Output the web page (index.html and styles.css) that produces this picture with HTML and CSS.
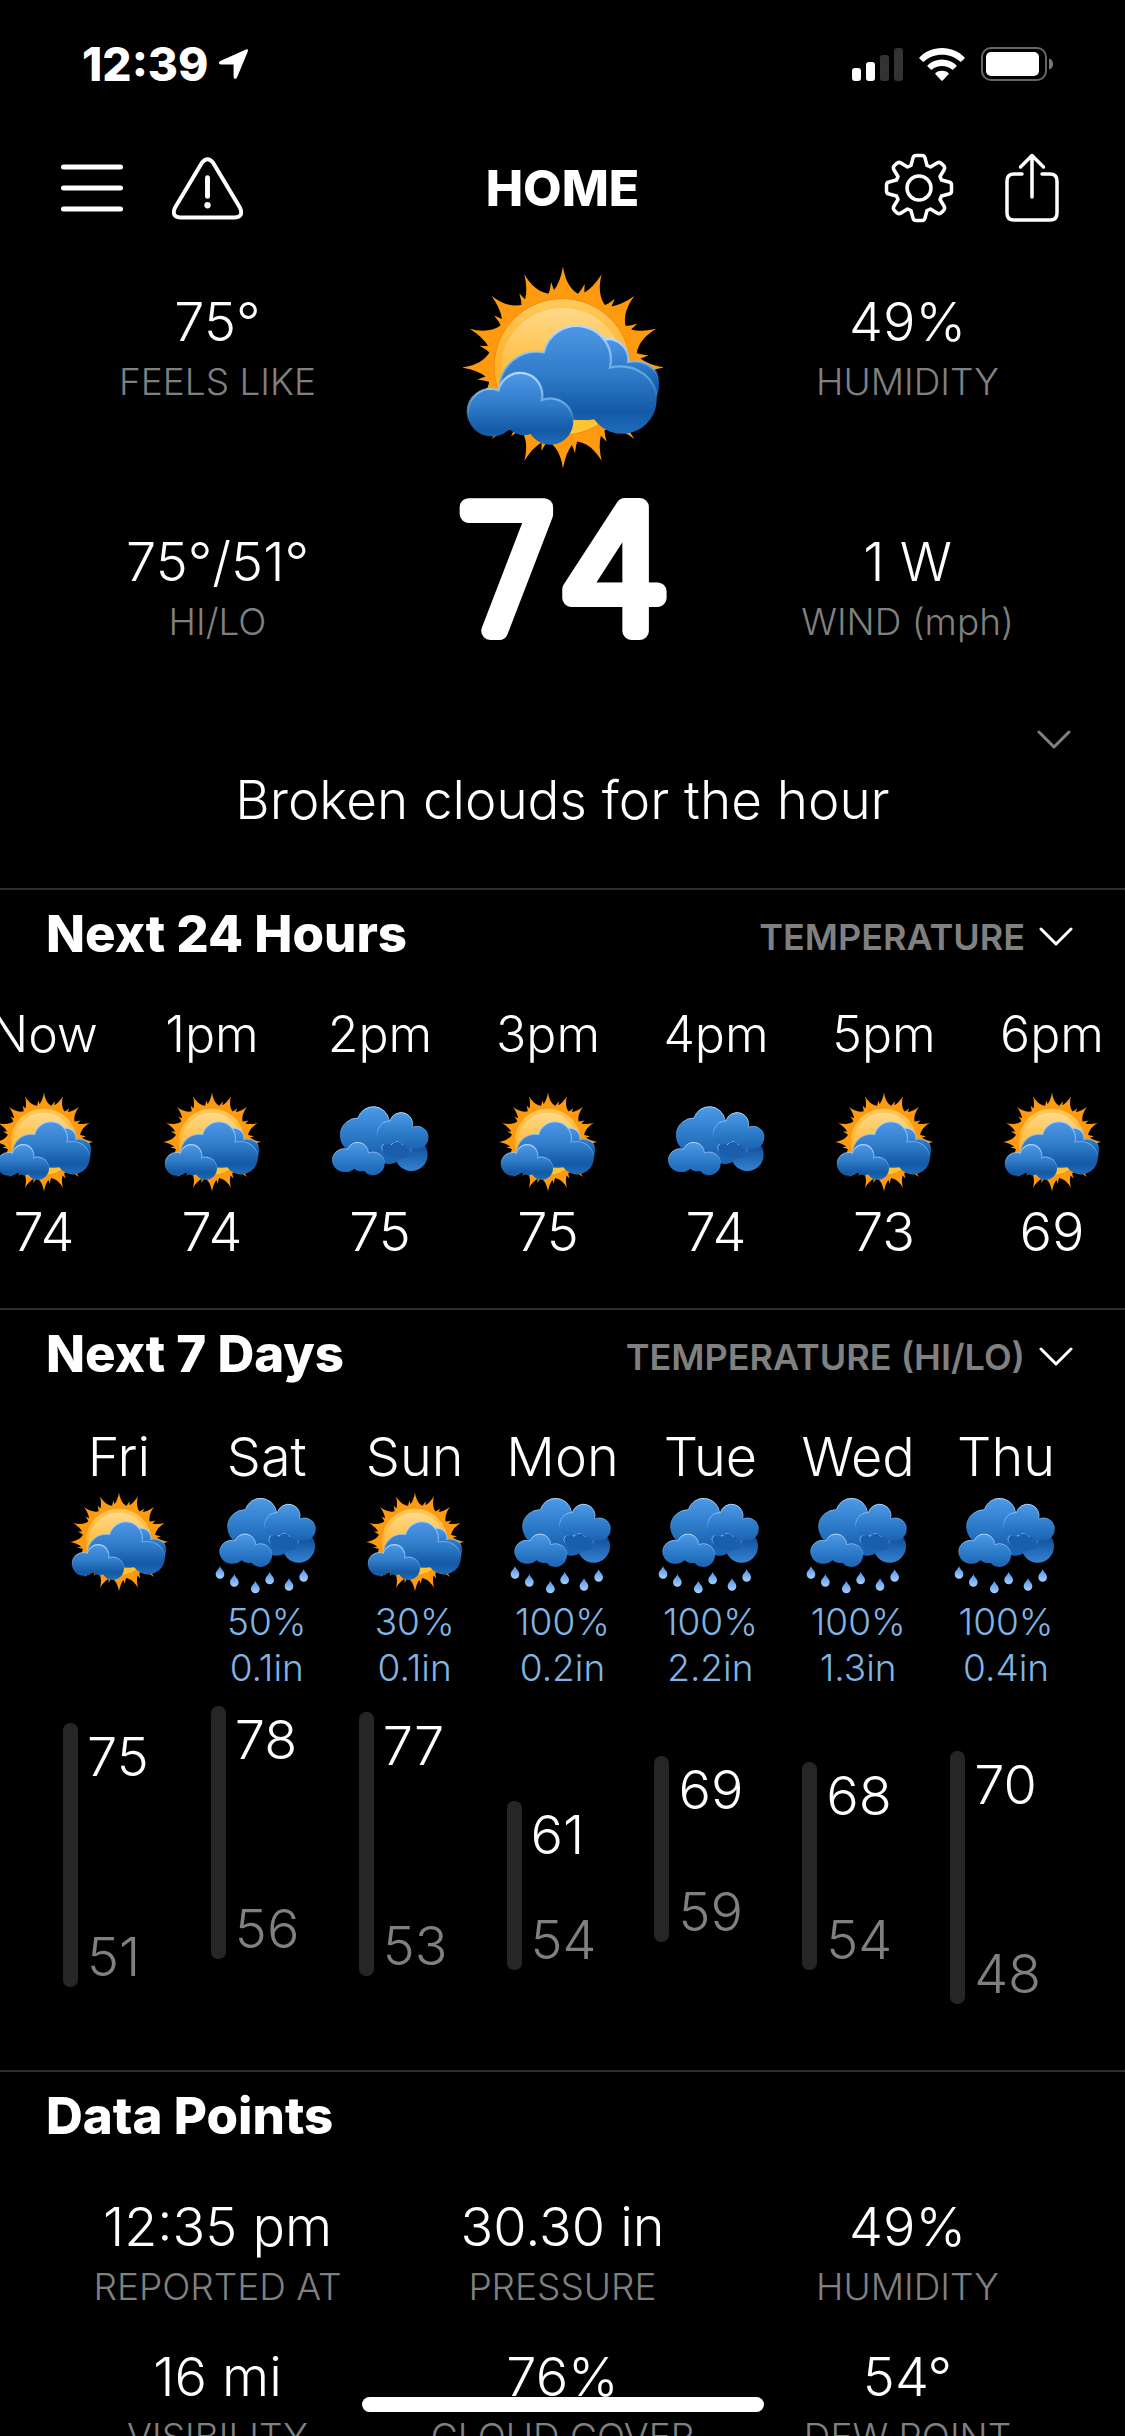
FILE: index.html
```html
<!DOCTYPE html>
<html lang="en">
<head>
	<meta charset="UTF-8">
	<meta name="viewport" content="width=device-width">
	<title>Home</title>
	<link rel="stylesheet" href="styles.css">
</head>
<body>
	<!-- shared weather icons -->
	<svg class="defs" aria-hidden="true">
		<defs>
			<linearGradient id="gCloud" x1="0" y1="0" x2="0" y2="1">
				<stop offset="0" stop-color="#4f97e6"/>
				<stop offset=".45" stop-color="#2f7cc9"/>
				<stop offset=".8" stop-color="#1459a5"/>
				<stop offset="1" stop-color="#1f6dbd"/>
			</linearGradient>
			<linearGradient id="gSoft" x1="0" y1="0" x2="0" y2="1">
				<stop offset="0" stop-color="#4d9ae6"/>
				<stop offset=".55" stop-color="#2d7cca"/>
				<stop offset="1" stop-color="#1c63b2"/>
			</linearGradient>
			<linearGradient id="gBack" x1="0" y1="0" x2="0" y2="1">
				<stop offset=".3" stop-color="#14549f"/>
				<stop offset="1" stop-color="#3583d2"/>
			</linearGradient>
			<linearGradient id="gEdge" x1="0" y1="0" x2="0" y2="1">
				<stop offset="0" stop-color="#b5d8fb"/>
				<stop offset=".5" stop-color="#7ab6f0" stop-opacity=".6"/>
				<stop offset=".7" stop-color="#6aabec" stop-opacity="0"/>
			</linearGradient>
			<linearGradient id="gSun" x1="0" y1="0" x2="0" y2="1">
				<stop offset="0" stop-color="#ffca5c"/>
				<stop offset=".5" stop-color="#ffb02a"/>
				<stop offset="1" stop-color="#ffc93a"/>
			</linearGradient>
			<linearGradient id="gSunIn" x1="0" y1="0" x2="0" y2="1">
				<stop offset="0" stop-color="#ffd98a"/>
				<stop offset=".5" stop-color="#ffbd3d"/>
				<stop offset="1" stop-color="#ffc42e"/>
			</linearGradient>
			<linearGradient id="gDrop" x1="0" y1="0" x2="0" y2="1">
				<stop offset="0" stop-color="#4a8fee"/>
				<stop offset="1" stop-color="#a9cffb"/>
			</linearGradient>
			<path id="ray" d="M0-305C5-268 20-235 50-220L50-150H-50L-46-214Q-38-235-36-258Q-32-246-27-234Q-8-258 0-305Z"/>
			<path id="drop" d="M0-19C3-9 13-4 13 6A13 13 0 0 1-13 6C-13-4-3-9 0-19Z" fill="url(#gDrop)"/>
			<g id="clouds">
				<circle cx="239" cy="148" r="49" fill="url(#gBack)"/>
				<circle cx="172" cy="133" r="43" fill="#1b63b3"/>
				<g stroke="url(#gEdge)" stroke-width="3">
					<path d="M64 142A53 53 0 0 1 79 38A48 48 0 0 1 172 43C196 60 200 100 192 128C182 148 150 152 130 142C110 150 85 150 64 142Z" fill="url(#gSoft)"/>
					<path d="M150 128C150 112 172 108 180 118C186 106 206 104 212 118C226 114 240 124 238 138C234 162 206 164 192 156C172 158 152 148 150 128Z" fill="#1a5fae"/>
					<path d="M146 110A38 38 0 0 1 175 47A34 34 0 0 1 242 66A34 34 0 0 1 290 97A34 34 0 0 1 256 131C242 132 228 128 222 124C212 118 204 108 194 108C180 118 158 120 146 110Z" fill="url(#gSoft)"/>
					<path d="M37 200A35 35 0 0 1 2 165A35 35 0 0 1 48 132A32 32 0 0 1 110 143A35 35 0 1 1 97 197C86 199 76 197 68 190C58 199 48 201 37 200Z" fill="url(#gSoft)"/>
				</g>
			</g>
		</defs>
		<symbol id="partly" viewBox="96 47 604 610">
			<g transform="translate(398 352)" fill="#ff9a0e">
				<circle r="218"/>
				<use href="#ray"/>
				<use href="#ray" transform="rotate(22.5)"/>
				<use href="#ray" transform="rotate(45)"/>
				<use href="#ray" transform="rotate(67.5)"/>
				<use href="#ray" transform="rotate(90)"/>
				<use href="#ray" transform="rotate(112.5)"/>
				<use href="#ray" transform="rotate(135)"/>
				<use href="#ray" transform="rotate(157.5)"/>
				<use href="#ray" transform="rotate(180)"/>
				<use href="#ray" transform="rotate(202.5)"/>
				<use href="#ray" transform="rotate(225)"/>
				<use href="#ray" transform="rotate(247.5)"/>
				<use href="#ray" transform="rotate(270)"/>
				<use href="#ray" transform="rotate(292.5)"/>
				<use href="#ray" transform="rotate(315)"/>
				<use href="#ray" transform="rotate(337.5)"/>
			</g>
			<circle cx="396" cy="350" r="206" fill="url(#gSun)" stroke="#f08a10" stroke-width="3"/>
			<circle cx="396" cy="358" r="186" fill="url(#gSunIn)"/>
			<g stroke="url(#gEdge)" stroke-width="7">
				<path d="M510 272A60 60 0 0 1 594 336C640 326 688 352 688 400C688 420 684 436 676 446H540Z" fill="url(#gCloud)"/>
				<path d="M205 420C206 345 268 294 340 306A101 101 0 0 1 540 352C620 336 681 385 681 450A104 104 0 0 1 492 508C470 512 430 512 400 506L205 440Z" fill="url(#gCloud)"/>
				<path d="M180 560A70 70 0 0 1 110 490A70 70 0 0 1 203 421A67 67 0 0 1 334 450A70 70 0 1 1 300 553C278 562 252 554 236 538C222 553 202 561 180 560Z" fill="url(#gCloud)"/>
			</g>
		</symbol>
		<symbol id="cloudy" viewBox="0 0 294 300">
			<use href="#clouds" transform="translate(2 40)"/>
		</symbol>
		<symbol id="rain" viewBox="0 0 294 300" overflow="visible">
			<use href="#clouds" transform="translate(3 15)"/>
			<g transform="translate(3 15)">
				<use href="#drop" x="3" y="226"/>
				<use href="#drop" x="46" y="250"/>
				<use href="#drop" x="109" y="270"/>
				<use href="#drop" x="152" y="243"/>
				<use href="#drop" x="210" y="262"/>
				<use href="#drop" x="254" y="235"/>
			</g>
		</symbol>
		<symbol id="chevron" viewBox="0 0 34 20">
			<path d="M2 2L17 17L32 2" fill="none" stroke="currentColor" stroke-width="3" stroke-linecap="round" stroke-linejoin="round"/>
		</symbol>
	</svg>

	<div class="app">
		<div class="status">
			<div class="status-left">
				<span class="time">12:39</span>
				<svg class="locate" viewBox="0 0 29 30"><path d="M27 0.5C28.5 0 29.2 1 28.8 2.4L18 28.5C17 30.6 14.6 30 14.6 28V15.6H2C-0.3 15.6-0.6 13 1.2 12Z" fill="#fff"/></svg>
			</div>
			<div class="status-right">
				<svg class="signal" viewBox="0 0 51 33">
					<rect x="0" y="20" width="9" height="13" rx="3" fill="#fff"/>
					<rect x="14" y="14" width="9" height="19" rx="3" fill="#fff"/>
					<rect x="28" y="7" width="9" height="26" rx="3" fill="#333"/>
					<rect x="42" y="0" width="9" height="33" rx="3" fill="#333"/>
				</svg>
				<svg class="wifi" viewBox="0 0 46 33">
					<g fill="#fff">
						<path d="M23 0C14 0 6.300 3.500.6 9.200Q0 10 .6 10.700L3.700 13.600Q4.400 14.200 5 13.600C9.600 9.200 16 6.700 23 6.700S36.400 9.200 41 13.600Q41.600 14.200 42.300 13.600L45.400 10.700Q46 10 45.400 9.200C39.700 3.500 32 0 23 0Z"/>
						<path d="M23 11.500C17.500 11.500 12.500 13.600 8.600 17.200Q8 17.900 8.600 18.500L11.800 21.600Q12.400 22.100 13 21.600C15.700 19.300 19 18 23 18S30.300 19.300 33 21.600Q33.600 22.100 34.200 21.600L37.400 18.500Q38 17.900 37.400 17.200C33.500 13.600 28.500 11.500 23 11.500Z"/>
						<path d="M23 22.800C20.500 22.800 18.200 23.600 16.500 25Q16 25.700 16.500 26.200L22.300 32.500Q23 33.200 23.700 32.500L29.500 26.200Q30 25.700 29.500 25C27.800 23.600 25.500 22.800 23 22.800Z"/>
					</g>
				</svg>
				<svg class="battery" viewBox="0 0 73 34">
					<rect x="1" y="1" width="64" height="32" rx="9" fill="none" stroke="#666" stroke-width="2"/>
					<rect x="5" y="5" width="53" height="24" rx="5" fill="#fff"/>
					<path d="M68 11.500C71.500 12.500 72 15 72 17S71.500 21.500 68 22.500Z" fill="#777"/>
				</svg>
			</div>
		</div>

		<nav class="nav">
			<div class="nav-group">
				<button type="button" aria-label="Menu">
					<svg width="62" height="50" viewBox="0 0 62 50"><path d="M2.500 4H59.500M2.500 25H59.500M2.500 46H59.500" stroke="#fff" stroke-width="5" stroke-linecap="round"/></svg>
				</button>
				<button type="button" aria-label="Alerts">
					<svg width="71" height="63" viewBox="0 0 72 64" fill="none" stroke="#fff" stroke-width="4"><path d="M30.500 5.500Q36-1 41.500 5.500L69 51.500Q73 60.500 64 61.500H8Q-1 60.500 3 51.500Z"/><path d="M36 21V40" stroke-width="5" stroke-linecap="round"/><circle cx="36" cy="49" r="3.200" fill="#fff" stroke="none"/></svg>
				</button>
			</div>
			<h1>HOME</h1>
			<div class="nav-group nav-right">
				<button type="button" aria-label="Settings">
					<svg width="70" height="70" viewBox="-35 -35 70 70" fill="none" stroke="#fff" stroke-width="3.500" stroke-linejoin="round">
						<path d="M-6-30Q-5.500-32.500-3-32.500H3Q5.500-32.500 6-30L8-22.500L11.500-21L18-25Q20.500-26.500 22.500-24.500L24.500-22.500Q26.500-20.500 25-18L21-11.500L22.500-8L30-6Q32.500-5.500 32.500-3V3Q32.500 5.500 30 6L22.500 8L21 11.500L25 18Q26.500 20.500 24.500 22.500L22.500 24.500Q20.500 26.500 18 25L11.500 21L8 22.500L6 30Q5.500 32.500 3 32.500H-3Q-5.500 32.500-6 30L-8 22.500L-11.500 21L-18 25Q-20.500 26.500-22.500 24.500L-24.500 22.500Q-26.500 20.500-25 18L-21 11.500L-22.500 8L-30 6Q-32.500 5.500-32.500 3V-3Q-32.500-5.500-30-6L-22.500-8L-21-11.500L-25-18Q-26.500-20.500-24.500-22.500L-22.500-24.500Q-20.500-26.500-18-25L-11.500-21L-8-22.500Z"/>
						<circle r="12"/>
					</svg>
				</button>
				<button type="button" aria-label="Share">
					<svg width="54" height="70" viewBox="0 0 54 70" fill="none" stroke="#fff" stroke-width="3.500" stroke-linecap="round"><path d="M17 21H9Q2 21 2 28V60Q2 67 9 67H45Q52 67 52 60V28Q52 21 45 21H37"/><path d="M27 3V44M15.500 14L27 2.500L38.500 14" stroke-linejoin="round"/></svg>
				</button>
			</div>
		</nav>

		<main>
			<section class="current">
				<div class="now">
					<dl class="stats">
						<div class="stat"><dt>FEELS LIKE</dt><dd>75°</dd></div>
						<div class="stat"><dt>HI/LO</dt><dd>75°/51°</dd></div>
					</dl>
					<div class="now-main">
						<svg class="now-icon" role="img" aria-label="Partly cloudy"><use href="#partly"/></svg>
						<svg class="now-temp" viewBox="0 0 240 160"><text x="120" y="141" text-anchor="middle">74</text></svg>
					</div>
					<dl class="stats">
						<div class="stat"><dt>HUMIDITY</dt><dd>49%</dd></div>
						<div class="stat"><dt>WIND (mph)</dt><dd>1 W</dd></div>
					</dl>
				</div>
				<button type="button" class="expand" aria-label="More"><svg class="chevron"><use href="#chevron"/></svg></button>
				<p class="summary">Broken clouds for the hour</p>
			</section>

			<section class="panel hours">
				<header class="panel-head">
					<h2>Next 24 Hours</h2>
					<label class="picker">
						<select aria-label="Hourly value"><option>TEMPERATURE</option></select>
						<svg class="chevron"><use href="#chevron"/></svg>
					</label>
				</header>
				<ol class="hour-list">
					<li><span class="hour">Now</span><svg class="icon"><use href="#partly"/></svg><span class="temp">74</span></li>
					<li><span class="hour">1pm</span><svg class="icon"><use href="#partly"/></svg><span class="temp">74</span></li>
					<li><span class="hour">2pm</span><svg class="icon"><use href="#cloudy"/></svg><span class="temp">75</span></li>
					<li><span class="hour">3pm</span><svg class="icon"><use href="#partly"/></svg><span class="temp">75</span></li>
					<li><span class="hour">4pm</span><svg class="icon"><use href="#cloudy"/></svg><span class="temp">74</span></li>
					<li><span class="hour">5pm</span><svg class="icon"><use href="#partly"/></svg><span class="temp">73</span></li>
					<li><span class="hour">6pm</span><svg class="icon"><use href="#partly"/></svg><span class="temp">69</span></li>
				</ol>
			</section>

			<section class="panel days">
				<header class="panel-head">
					<h2>Next 7 Days</h2>
					<label class="picker">
						<select aria-label="Daily value"><option>TEMPERATURE (HI/LO)</option></select>
						<svg class="chevron"><use href="#chevron"/></svg>
					</label>
				</header>
				<!-- range bars: top = (78 - hi) * 5.6, height = (hi - lo) * 5.6 + 130 -->
				<ol class="day-list">
					<li>
						<span class="day">Fri</span><svg class="icon"><use href="#partly"/></svg>
						<div class="precip"></div>
						<div class="range" style="margin-top:17px;height:264px"><span class="hi">75</span><span class="lo">51</span></div>
					</li>
					<li>
						<span class="day">Sat</span><svg class="icon"><use href="#rain"/></svg>
						<div class="precip"><span>50%</span><span>0.1in</span></div>
						<div class="range" style="margin-top:0px;height:253px"><span class="hi">78</span><span class="lo">56</span></div>
					</li>
					<li>
						<span class="day">Sun</span><svg class="icon"><use href="#partly"/></svg>
						<div class="precip"><span>30%</span><span>0.1in</span></div>
						<div class="range" style="margin-top:6px;height:264px"><span class="hi">77</span><span class="lo">53</span></div>
					</li>
					<li>
						<span class="day">Mon</span><svg class="icon"><use href="#rain"/></svg>
						<div class="precip"><span>100%</span><span>0.2in</span></div>
						<div class="range" style="margin-top:95px;height:169px"><span class="hi">61</span><span class="lo">54</span></div>
					</li>
					<li>
						<span class="day">Tue</span><svg class="icon"><use href="#rain"/></svg>
						<div class="precip"><span>100%</span><span>2.2in</span></div>
						<div class="range" style="margin-top:50px;height:186px"><span class="hi">69</span><span class="lo">59</span></div>
					</li>
					<li>
						<span class="day">Wed</span><svg class="icon"><use href="#rain"/></svg>
						<div class="precip"><span>100%</span><span>1.3in</span></div>
						<div class="range" style="margin-top:56px;height:208px"><span class="hi">68</span><span class="lo">54</span></div>
					</li>
					<li>
						<span class="day">Thu</span><svg class="icon"><use href="#rain"/></svg>
						<div class="precip"><span>100%</span><span>0.4in</span></div>
						<div class="range" style="margin-top:45px;height:253px"><span class="hi">70</span><span class="lo">48</span></div>
					</li>
				</ol>
			</section>

			<section class="panel">
				<header class="panel-head"><h2>Data Points</h2></header>
				<dl class="points">
					<div class="stat"><dt>REPORTED AT</dt><dd>12:35 pm</dd></div>
					<div class="stat"><dt>PRESSURE</dt><dd>30.30 in</dd></div>
					<div class="stat"><dt>HUMIDITY</dt><dd>49%</dd></div>
					<div class="stat"><dt>VISIBILITY</dt><dd>16 mi</dd></div>
					<div class="stat"><dt>CLOUD COVER</dt><dd>76%</dd></div>
					<div class="stat"><dt>DEW POINT</dt><dd>54°</dd></div>
				</dl>
			</section>
		</main>
		<div class="home-bar"></div>
	</div>
</body>
</html>
```
FILE: styles.css
```css
*{margin:0;padding:0;box-sizing:border-box;}
body{background-color:#000;color:#fff;font-family:Inter,"Liberation Sans",sans-serif;font-weight:300;}
button{background:none;border:0;color:inherit;display:block;cursor:pointer;}
svg{display:block;}
ol{list-style:none;}
.defs{position:absolute;width:0;height:0;}
.app{height:100vh;overflow:hidden;}

/* status bar */
.status{height:128px;padding:0 71px 0 82px;display:flex;align-items:center;justify-content:space-between;}
.status-left{display:flex;align-items:center;gap:10px;}
.status-right{display:flex;align-items:center;gap:16px;}
.time{font-size:46px;font-weight:800;line-height:56px;}
.locate{width:29px;height:30px;}
.signal{width:51px;height:33px;}
.wifi{width:46px;height:33px;}
.battery{width:73px;height:34px;}

/* nav */
.nav{height:120px;padding:0 61px;display:grid;grid-template-columns:1fr auto 1fr;align-items:center;}
.nav-group{display:flex;align-items:center;gap:49px;}
.nav-right{justify-content:flex-end;gap:51px;padding-right:5px;}
.nav h1{font-size:50px;line-height:60px;font-weight:800;}

/* current conditions */
.current{padding-bottom:58px;}
.now{display:grid;grid-template-columns:repeat(3,1fr);padding:0 45px;}
.now-main{display:flex;flex-direction:column;align-items:center;padding-top:18px;}
.now-icon{width:200px;height:203px;}
.now-temp{width:240px;height:160px;margin-top:21px;overflow:visible;}
.now-temp text{font-family:"DejaVu Sans Light","DejaVu Sans",sans-serif;font-size:170px;font-weight:200;fill:#fff;stroke:#fff;stroke-width:18px;stroke-linejoin:round;}
.stats{display:flex;flex-direction:column;gap:128px;padding-top:44px;}
.stat{display:flex;flex-direction:column-reverse;gap:8px;text-align:center;}
.stat dd{font-size:54px;line-height:60px;}
.stat dt{font-size:37px;line-height:44px;color:#808080;}
.chevron{width:34px;height:20px;}
.expand{margin:70px 54px 0 auto;padding:10px 0;color:#808080;}
.summary{font-size:53px;line-height:60px;text-align:center;margin-top:10px;}

/* panels */
.panel{border-top:2px solid #2e2e2e;}
.panel-head{display:flex;justify-content:space-between;align-items:center;padding:14px 52px 0 46px;}
.panel-head h2{font-size:51px;line-height:60px;font-weight:800;}
.picker{display:flex;align-items:center;gap:14px;padding-top:6px;}
.picker select{appearance:none;background:none;border:0;color:#808080;font:600 36px/44px Inter,"Liberation Sans",sans-serif;text-align:right;}

/* hourly */
.hour-list{display:flex;margin:40px 0 46px -40px;}
.hour-list li{flex:0 0 168px;display:flex;flex-direction:column;align-items:center;}
.hour{font-size:50px;line-height:60px;}
.temp,.day{font-size:54px;line-height:60px;}
.icon{width:98px;height:100px;overflow:visible;}
.hour-list .icon{margin:28px 0 10px;}

/* daily */
.day-list{display:grid;grid-template-columns:repeat(7,1fr);padding:43px 45px 66px;}
.day-list li{display:flex;flex-direction:column;align-items:center;}
.day-list .icon{margin:5px 0 7px;}
.precip{height:92px;margin-bottom:15px;display:flex;flex-direction:column;text-align:center;font-size:37px;line-height:46px;color:#7fb4e3;}
.range{align-self:stretch;margin-left:18px;padding-top:4px;display:grid;grid-template-columns:15px auto;column-gap:9px;align-content:space-between;font-size:54px;line-height:60px;}
.range:before{content:"";grid-row:1 / 3;margin-top:-4px;border-radius:7px;background-color:#262626;}
.hi,.lo{grid-column:2;}
.lo{color:#808080;align-self:end;}

/* data points */
.points{display:grid;grid-template-columns:repeat(3,1fr);row-gap:38px;padding:51px 45px 40px;}

.home-bar{position:fixed;left:50%;bottom:24px;width:402px;height:15px;margin-left:-201px;border-radius:8px;background-color:#fff;}
```
